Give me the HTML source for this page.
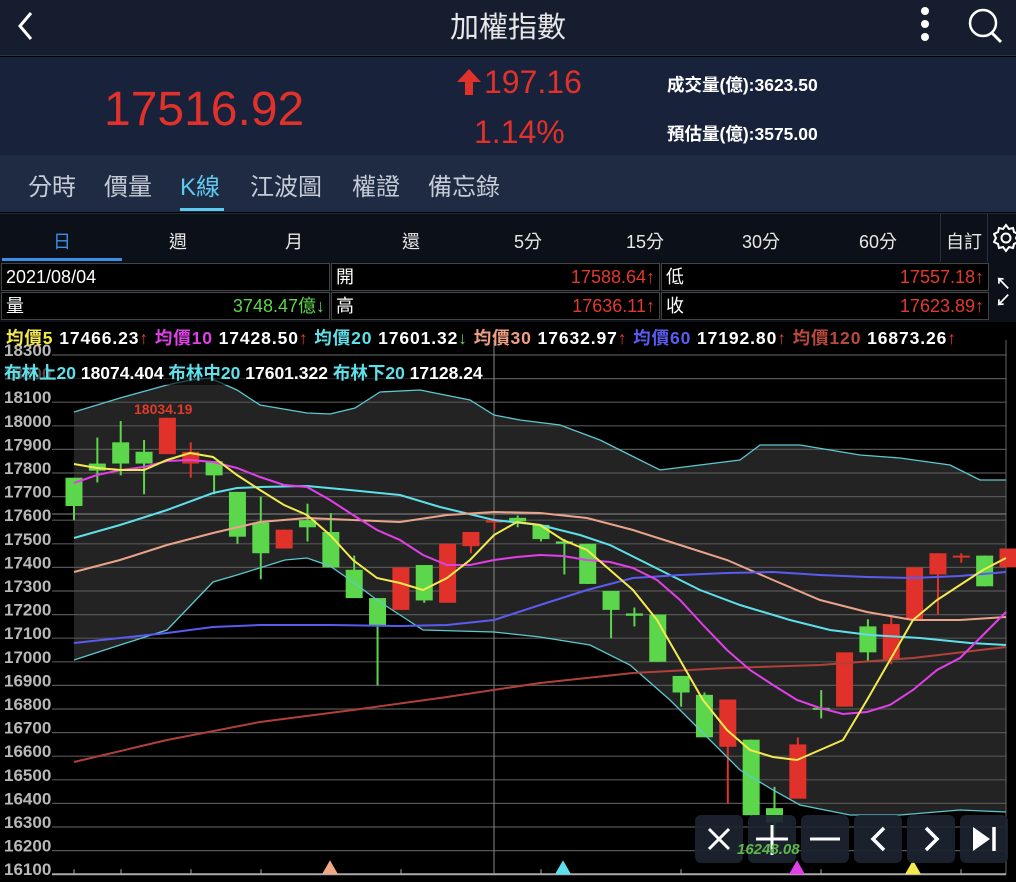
<!DOCTYPE html>
<html><head><meta charset="utf-8">
<style>
*{margin:0;padding:0;box-sizing:border-box}
body{width:1016px;height:882px;overflow:hidden;background:#000;font-family:"Liberation Sans","Noto Sans CJK TC",sans-serif;position:relative}
.abs{position:absolute}
#hdr{left:0;top:0;width:1016px;height:56px;background:#151d2f;border-bottom:1px solid #2a3447}
#quote{left:0;top:57px;width:1016px;height:98px;background:#18223a}
#tabs{left:0;top:155px;width:1016px;height:57px;background:#1f2b43}
#per{left:0;top:213px;width:1016px;height:49px;background:#0b1019;border-top:1px solid #222a38}
.tab{position:absolute;top:12px;font-size:24px;color:#c5ccd8}
.p{position:absolute;top:14px;font-size:18px;color:#e8e8e8;text-align:center;width:116px}
.cell{position:absolute;height:28px;background:#000;border:1px solid #444;font-size:18px;color:#fff;line-height:26px;padding:0 4px}
.r{color:#e23a2c;float:right}
.g{color:#5cd64a;float:right}
.ma{position:absolute;top:325px;font-size:17.5px;font-weight:bold;white-space:nowrap;color:#fff}
.btn{position:absolute;top:815px;width:48px;height:48px;background:rgba(28,36,48,.92);border-radius:6px}
</style></head><body>
<div id="hdr" class="abs">
<svg class="abs" style="left:14px;top:10px" width="24" height="32"><path d="M17 3 L6 16 L17 29" stroke="#fff" stroke-width="3" fill="none"/></svg>
<div class="abs" style="left:0;width:1016px;top:4px;text-align:center;font-size:29px;color:#e8e8e8">加權指數</div>
<svg class="abs" style="left:915px;top:6px" width="20" height="36"><circle cx="10" cy="5" r="4" fill="#fff"/><circle cx="10" cy="18" r="4" fill="#fff"/><circle cx="10" cy="31" r="4" fill="#fff"/></svg>
<svg class="abs" style="left:965px;top:6px" width="40" height="40"><circle cx="18" cy="17" r="13" stroke="#fff" stroke-width="2.5" fill="none"/><path d="M27 27 L36 36" stroke="#fff" stroke-width="3"/></svg>
</div>
<div id="quote" class="abs">
<div class="abs" style="left:104px;top:25px;font-size:48px;color:#e0312a">17516.92</div>
<svg class="abs" style="left:455px;top:10px" width="28" height="30"><path d="M14 2 L26 15 L18 15 L18 28 L10 28 L10 15 L2 15 Z" fill="#e0312a"/></svg>
<div class="abs" style="left:484px;top:7px;font-size:32px;color:#e0312a">197.16</div>
<div class="abs" style="left:474px;top:57px;font-size:32px;color:#e0312a">1.14%</div>
<div class="abs" style="left:667px;top:15px;font-size:17.5px;color:#fff;font-weight:bold">成交量(億):3623.50</div>
<div class="abs" style="left:667px;top:64px;font-size:17.5px;color:#fff;font-weight:bold">預估量(億):3575.00</div>
</div>
<div id="tabs" class="abs">
<div class="tab" style="left:28px">分時</div>
<div class="tab" style="left:104px">價量</div>
<div class="tab" style="left:180px;color:#5ec8ee">K線</div>
<div class="tab" style="left:250px">江波圖</div>
<div class="tab" style="left:352px">權證</div>
<div class="tab" style="left:428px">備忘錄</div>
<div class="abs" style="left:180px;top:53px;width:44px;height:3px;background:#5ec8ee"></div>
</div>
<div id="per" class="abs">
<div class="p" style="left:4px;color:#3d8ee8">日</div>
<div class="abs" style="left:2px;top:44px;width:120px;height:3px;background:#3d8ee8"></div>
<div class="p" style="left:120px">週</div>
<div class="p" style="left:236px">月</div>
<div class="p" style="left:353px">還</div>
<div class="p" style="left:470px">5分</div>
<div class="p" style="left:587px">15分</div>
<div class="p" style="left:703px">30分</div>
<div class="p" style="left:820px">60分</div>
<div class="abs" style="left:940px;top:0;width:48px;height:48px;border-left:1px solid #2a3240;border-right:1px solid #2a3240"></div>
<div class="p" style="left:940px;width:48px">自訂</div>
<svg class="abs" style="left:993px;top:9px" width="26" height="30"><path d="M13 2 l3 4 4-1 1 4 4 2-2 4 2 4-4 2-1 4-4-1-3 4-3-4-4 1-1-4-4-2 2-4-2-4 4-2 1-4 4 1z" stroke="#fff" stroke-width="2" fill="none"/><circle cx="13" cy="15" r="4.5" stroke="#fff" stroke-width="2" fill="none"/></svg>
</div>
<div class="abs" style="left:0;top:262px;width:1016px;height:60px;background:#0b1019"></div>
<div class="cell" style="left:1px;top:263px;width:329px">2021/08/04</div>
<div class="cell" style="left:331px;top:263px;width:329px">開<span class="r">17588.64↑</span></div>
<div class="cell" style="left:661px;top:263px;width:328px">低<span class="r">17557.18↑</span></div>
<div class="cell" style="left:1px;top:292px;width:329px">量<span class="g">3748.47億↓</span></div>
<div class="cell" style="left:331px;top:292px;width:329px">高<span class="r">17636.11↑</span></div>
<div class="cell" style="left:661px;top:292px;width:328px">收<span class="r">17623.89↑</span></div>
<div class="abs" style="left:995px;top:276px;color:#fff;font-size:16px;line-height:17px;font-weight:bold">↖<br>↙</div>
<svg id="ch" class="abs" style="left:0;top:340px" width="1016" height="542"></svg>
<div class="ma" style="left:6px;letter-spacing:0.9px"><span style="color:#f4e84a">均價5</span> 17466.23<span style="color:#e23a2c">↑</span> <span style="color:#e040e8">均價10</span> 17428.50<span style="color:#e23a2c">↑</span> <span style="color:#5ee0ea">均價20</span> 17601.32<span style="color:#5cd64a">↓</span> <span style="color:#f0a080">均價30</span> 17632.97<span style="color:#e23a2c">↑</span> <span style="color:#5a5cf0">均價60</span> 17192.80<span style="color:#e23a2c">↑</span> <span style="color:#b84a3c">均價120</span> 16873.26<span style="color:#e23a2c">↑</span></div>
<div class="ma" style="left:4px;top:360px;background:rgba(0,0,0,.6)"><span style="color:#5ee0ea">布林上20</span> 18074.404 <span style="color:#5ee0ea">布林中20</span> 17601.322 <span style="color:#5ee0ea">布林下20</span> 17128.24</div>
<div class="btn" style="left:695px"><svg width="48" height="48"><path d="M14 14L34 34M34 14L14 34" stroke="#fff" stroke-width="3"/></svg></div>
<div class="btn" style="left:748px"><svg width="48" height="48"><path d="M24 10V40M8 24H40" stroke="#fff" stroke-width="3"/></svg></div>
<div class="btn" style="left:801px"><svg width="48" height="48"><path d="M9 24H39" stroke="#fff" stroke-width="3"/></svg></div>
<div class="btn" style="left:854px"><svg width="48" height="48"><path d="M30 13L19 24L30 35" stroke="#fff" stroke-width="3.5" fill="none"/></svg></div>
<div class="btn" style="left:907px"><svg width="48" height="48"><path d="M19 13L30 24L19 35" stroke="#fff" stroke-width="3.5" fill="none"/></svg></div>
<div class="btn" style="left:960px"><svg width="48" height="48"><path d="M13 12V36L30 24Z" fill="#fff"/><path d="M34 12V36" stroke="#fff" stroke-width="3.5"/></svg></div>
<div class="abs" style="left:737px;top:841px;font-size:15px;font-weight:bold;font-style:italic;color:#5cb84a">16248.08</div>
<div class="abs" style="left:134px;top:401px;font-size:14px;font-weight:bold;color:#e23a2c">18034.19</div>
<script>
const s=document.getElementById('ch');const O=340;
const Y=p=>355+(18300-p)*0.236-O;
let h='';
const up=[[74,412],[120,398],[167,385],[190,380],[210,378],[237,390],[260,405],[307,413],[330,414],[355,408],[380,392],[420,390],[470,400],[494,415],[520,420],[560,425],[600,440],[630,455],[660,470],[700,465],[740,460],[760,445],[800,445],[860,455],[900,458],[950,465],[980,480],[1006,480]];
const lo=[[74,660],[120,645],[167,630],[213,582],[237,575],[285,560],[307,558],[330,566],[353,582],[377,600],[400,615],[423,630],[494,632],[540,637],[590,645],[630,665],[670,700],[700,730],[740,770],[773,790],[800,805],[850,815],[900,815],[960,810],[1006,812]];
const pts=a=>a.map(q=>q[0]+','+(q[1]-O)).join(' ');
h+=`<polygon points="${pts(up)} ${pts(lo.slice().reverse())}" fill="#232323"/>`;
for(let p=18300;p>=16100;p-=100){const y=Y(p);h+=`<line x1="52" x2="1006" y1="${y}" y2="${y}" stroke="#555" stroke-width="1.2"/><text x="4" y="${y+1}" fill="#b8b8b8" font-size="17" font-weight="bold" font-family="Liberation Sans">${p}</text>`;}
h+=`<line x1="1006" x2="1006" y1="0" y2="${Y(16100)}" stroke="#666"/>`;
h+=`<line x1="494" x2="494" y1="0" y2="${Y(16100)}" stroke="#888"/><line x1="52" x2="1006" y1="${514-O}" y2="${514-O}" stroke="#888"/>`;
[74,121,191,261,401,541,681,821,961].forEach(x=>h+=`<line x1="${x}" x2="${x}" y1="${Y(16100)}" y2="${Y(16100)-5}" stroke="#aaa"/>`);
h+=`<line x1="52" x2="1006" y1="${Y(16100)}" y2="${Y(16100)}" stroke="#aaa" stroke-width="2"/>`;
const C=[[17660,17780,17780,17600],[17810,17840,17950,17760],[17840,17930,18020,17790],[17840,17890,17940,17710],[18034,17880,18034,17880],[17890,17840,17930,17780],[17850,17790,17850,17710],[17720,17530,17720,17500],[17590,17460,17700,17350],[17480,17560,17560,17480],[17600,17570,17670,17510],[17550,17400,17630,17400],[17390,17270,17450,17270],[17270,17150,17270,16900],[17220,17400,17400,17220],[17410,17260,17410,17250],[17250,17500,17500,17250],[17490,17550,17550,17460],[17590,17600,17600,17560],[17610,17595,17620,17570],[17580,17520,17580,17510],[17510,17500,17520,17370],[17500,17330,17500,17330],[17300,17220,17300,17100],[17205,17195,17230,17150],[17200,17000,17200,17000],[16940,16870,16940,16810],[16860,16680,16870,16680],[16640,16840,16840,16400],[16670,16350,16670,16350],[16380,16320,16470,16248],[16420,16650,16680,16420],[16805,16800,16880,16760],[16810,17040,17040,16810],[17150,17040,17180,17000],[17010,17160,17190,16990],[17180,17400,17400,17180],[17370,17460,17460,17200],[17445,17450,17460,17420],[17450,17320,17450,17320],[17400,17480,17480,17400]];
const K='ggggrrgggrggggrgrrrgggggggggrggrgrgrrrrgr';
C.forEach((c,i)=>{const x=74+i*23.35;const col=K[i]=='r'?'#e0312a':'#5cd64a';const t=Y(Math.max(c[0],c[1])),b=Y(Math.min(c[0],c[1]));
h+=`<line x1="${x}" x2="${x}" y1="${Y(c[2])}" y2="${Y(c[3])}" stroke="${col}" stroke-width="2"/><rect x="${x-8.5}" y="${t}" width="17" height="${Math.max(2,b-t)}" fill="${col}"/>`;});
const L=(a,col,w)=>h+=`<polyline points="${pts(a)}" fill="none" stroke="${col}" stroke-width="${w}"/>`;
L(up,'#5cc8d0',1.3);L(lo,'#5cc8d0',1.3);
L([[74,538],[120,525],[167,510],[213,493],[237,488],[260,487],[307,486],[350,490],[400,495],[440,507],[494,520],[540,525],[580,535],[610,545],[650,565],[700,590],[740,605],[790,620],[830,630],[870,635],[920,638],[970,643],[1006,645]],'#5ee0ea',2);
L([[74,572],[120,560],[167,545],[213,533],[260,522],[307,518],[353,520],[400,522],[447,515],[494,512],[540,513],[587,518],[633,530],[680,545],[727,560],[773,580],[820,600],[867,612],[913,620],[960,620],[1006,617]],'#eaa48a',2);
L([[74,643],[120,638],[167,633],[213,627],[260,625],[330,625],[400,626],[447,625],[494,620],[540,605],[587,590],[633,578],[680,575],[727,573],[773,572],[820,575],[867,577],[913,578],[960,576],[1006,572]],'#5a5cf0',2);
L([[74,762],[167,740],[260,722],[353,710],[447,697],[540,683],[633,673],[727,668],[820,665],[913,658],[1006,647]],'#b0403a',2);
L([[74,483],[97,475],[121,470],[144,467],[167,461],[190,460],[213,462],[237,468],[260,477],[284,485],[307,487],[330,500],[353,515],[377,530],[400,540],[423,555],[447,565],[470,565],[494,560],[517,557],[540,555],[563,556],[587,560],[610,562],[633,568],[657,580],[680,600],[703,625],[727,650],[750,670],[773,685],[797,700],[820,708],[843,714],[867,712],[890,705],[913,690],[937,670],[960,658],[983,635],[1006,612]],'#e040e8',2);
L([[74,464],[97,468],[121,470],[144,470],[167,460],[190,453],[213,457],[237,475],[260,490],[284,505],[307,515],[330,535],[353,560],[377,578],[400,583],[423,590],[447,578],[470,560],[494,535],[517,522],[540,525],[563,540],[587,550],[610,570],[633,590],[657,620],[680,660],[703,700],[727,730],[750,750],[773,757],[797,760],[820,750],[843,740],[867,700],[890,660],[913,620],[937,600],[960,585],[983,570],[1006,558]],'#f4ea50',2);
const T=(x,col)=>{const y=Y(16100);h+=`<path d="M${x} ${y-14}L${x+8} ${y}L${x-8} ${y}Z" fill="${col}"/>`};
T(330,'#f0a888');T(563,'#5ee0ea');T(797,'#e040e8');T(913,'#f4ea50');
s.innerHTML=h;
</script>
</body></html>
